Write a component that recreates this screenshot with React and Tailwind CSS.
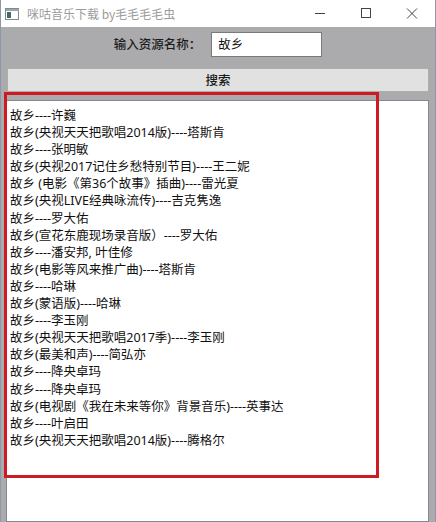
const songs = [
  "故乡----许巍",
  "故乡(央视天天把歌唱2014版)----塔斯肯",
  "故乡----张明敏",
  "故乡(央视2017记住乡愁特别节目)----王二妮",
  "故乡 (电影《第36个故事》插曲)----雷光夏",
  "故乡(央视LIVE经典咏流传)----吉克隽逸",
  "故乡----罗大佑",
  "故乡(宣花东鹿现场录音版）----罗大佑",
  "故乡----潘安邦, 叶佳修",
  "故乡(电影等风来推广曲)----塔斯肯",
  "故乡----哈琳",
  "故乡(蒙语版)----哈琳",
  "故乡----李玉刚",
  "故乡(央视天天把歌唱2017季)----李玉刚",
  "故乡(最美和声)----简弘亦",
  "故乡----降央卓玛",
  "故乡----降央卓玛",
  "故乡(电视剧《我在未来等你》背景音乐)----英事达",
  "故乡----叶启田",
  "故乡(央视天天把歌唱2014版)----腾格尔",
];

const font = "font-['Noto_Sans_CJK_SC','Noto_Sans',sans-serif]";

const App = () => {
  return (
    <div
      className={`relative flex h-[522px] w-[436px] flex-col overflow-hidden border-x border-[#8c98aa] bg-[#abaaac] ${font}`}
    >
      {/* title bar */}
      <div className="flex h-[27px] shrink-0 items-center bg-white">
        <svg width="14" height="12" viewBox="0 0 14 12" className="ml-[4px]">
          <rect x="0.5" y="0.5" width="13" height="11" fill="#fff" stroke="#7d8a94" />
          <rect x="1" y="1" width="13" height="2" fill="#9aa6ae" />
          <rect x="2" y="4" width="4" height="6" fill="#3f6b63" />
        </svg>
        <span className="ml-[8px] text-[12px] text-[#9b9b9b]">咪咕音乐下载 by毛毛毛毛虫</span>
        <div className="ml-auto flex items-center">
          <svg width="46" height="27" viewBox="0 0 46 27">
            <line x1="18" y1="13.5" x2="28" y2="13.5" stroke="#444" strokeWidth="1" />
          </svg>
          <svg width="46" height="27" viewBox="0 0 46 27">
            <rect x="18.5" y="8.5" width="9" height="9" fill="none" stroke="#444" strokeWidth="1" />
          </svg>
          <svg width="46" height="27" viewBox="0 0 46 27">
            <path d="M18 8.5 L28 18.5 M28 8.5 L18 18.5" stroke="#444" strokeWidth="1" />
          </svg>
        </div>
      </div>

      {/* search row */}
      <div className="mt-[5px] flex h-[25px] items-center justify-center gap-[10px]">
        <span className="text-[12.5px] font-medium text-[#1c1c1c]">输入资源名称：</span>
        <div className="flex h-[25px] w-[111px] items-center border border-[#7a7a7a] bg-white px-[6px] text-[12.5px] text-[#111]">
          故乡
        </div>
      </div>

      <button className="ml-[6px] mr-[6px] mt-[11px] h-[24px] shrink-0 border border-[#adadad] bg-[#e1e1e1] text-[12.5px] font-medium text-[#1c1c1c]">
        搜索
      </button>

      {/* result list */}
      <div className="ml-[5px] mr-[6px] mt-[8px] flex-1 border border-[#828790] bg-white pl-[3px] pt-[6px] font-['Noto_Sans','Noto_Sans_CJK_SC',sans-serif]">
        {songs.map((s, i) => (
          <div key={i} className="h-[17.1px] whitespace-nowrap text-[12.5px] leading-[17.1px] text-[#111]">
            {s}
          </div>
        ))}
      </div>

      {/* annotation */}
      <div className="pointer-events-none absolute left-[3px] top-[92px] h-[386px] w-[375px] border-[3px] border-[#cc1b22]" />
    </div>
  );
};

export default App;
